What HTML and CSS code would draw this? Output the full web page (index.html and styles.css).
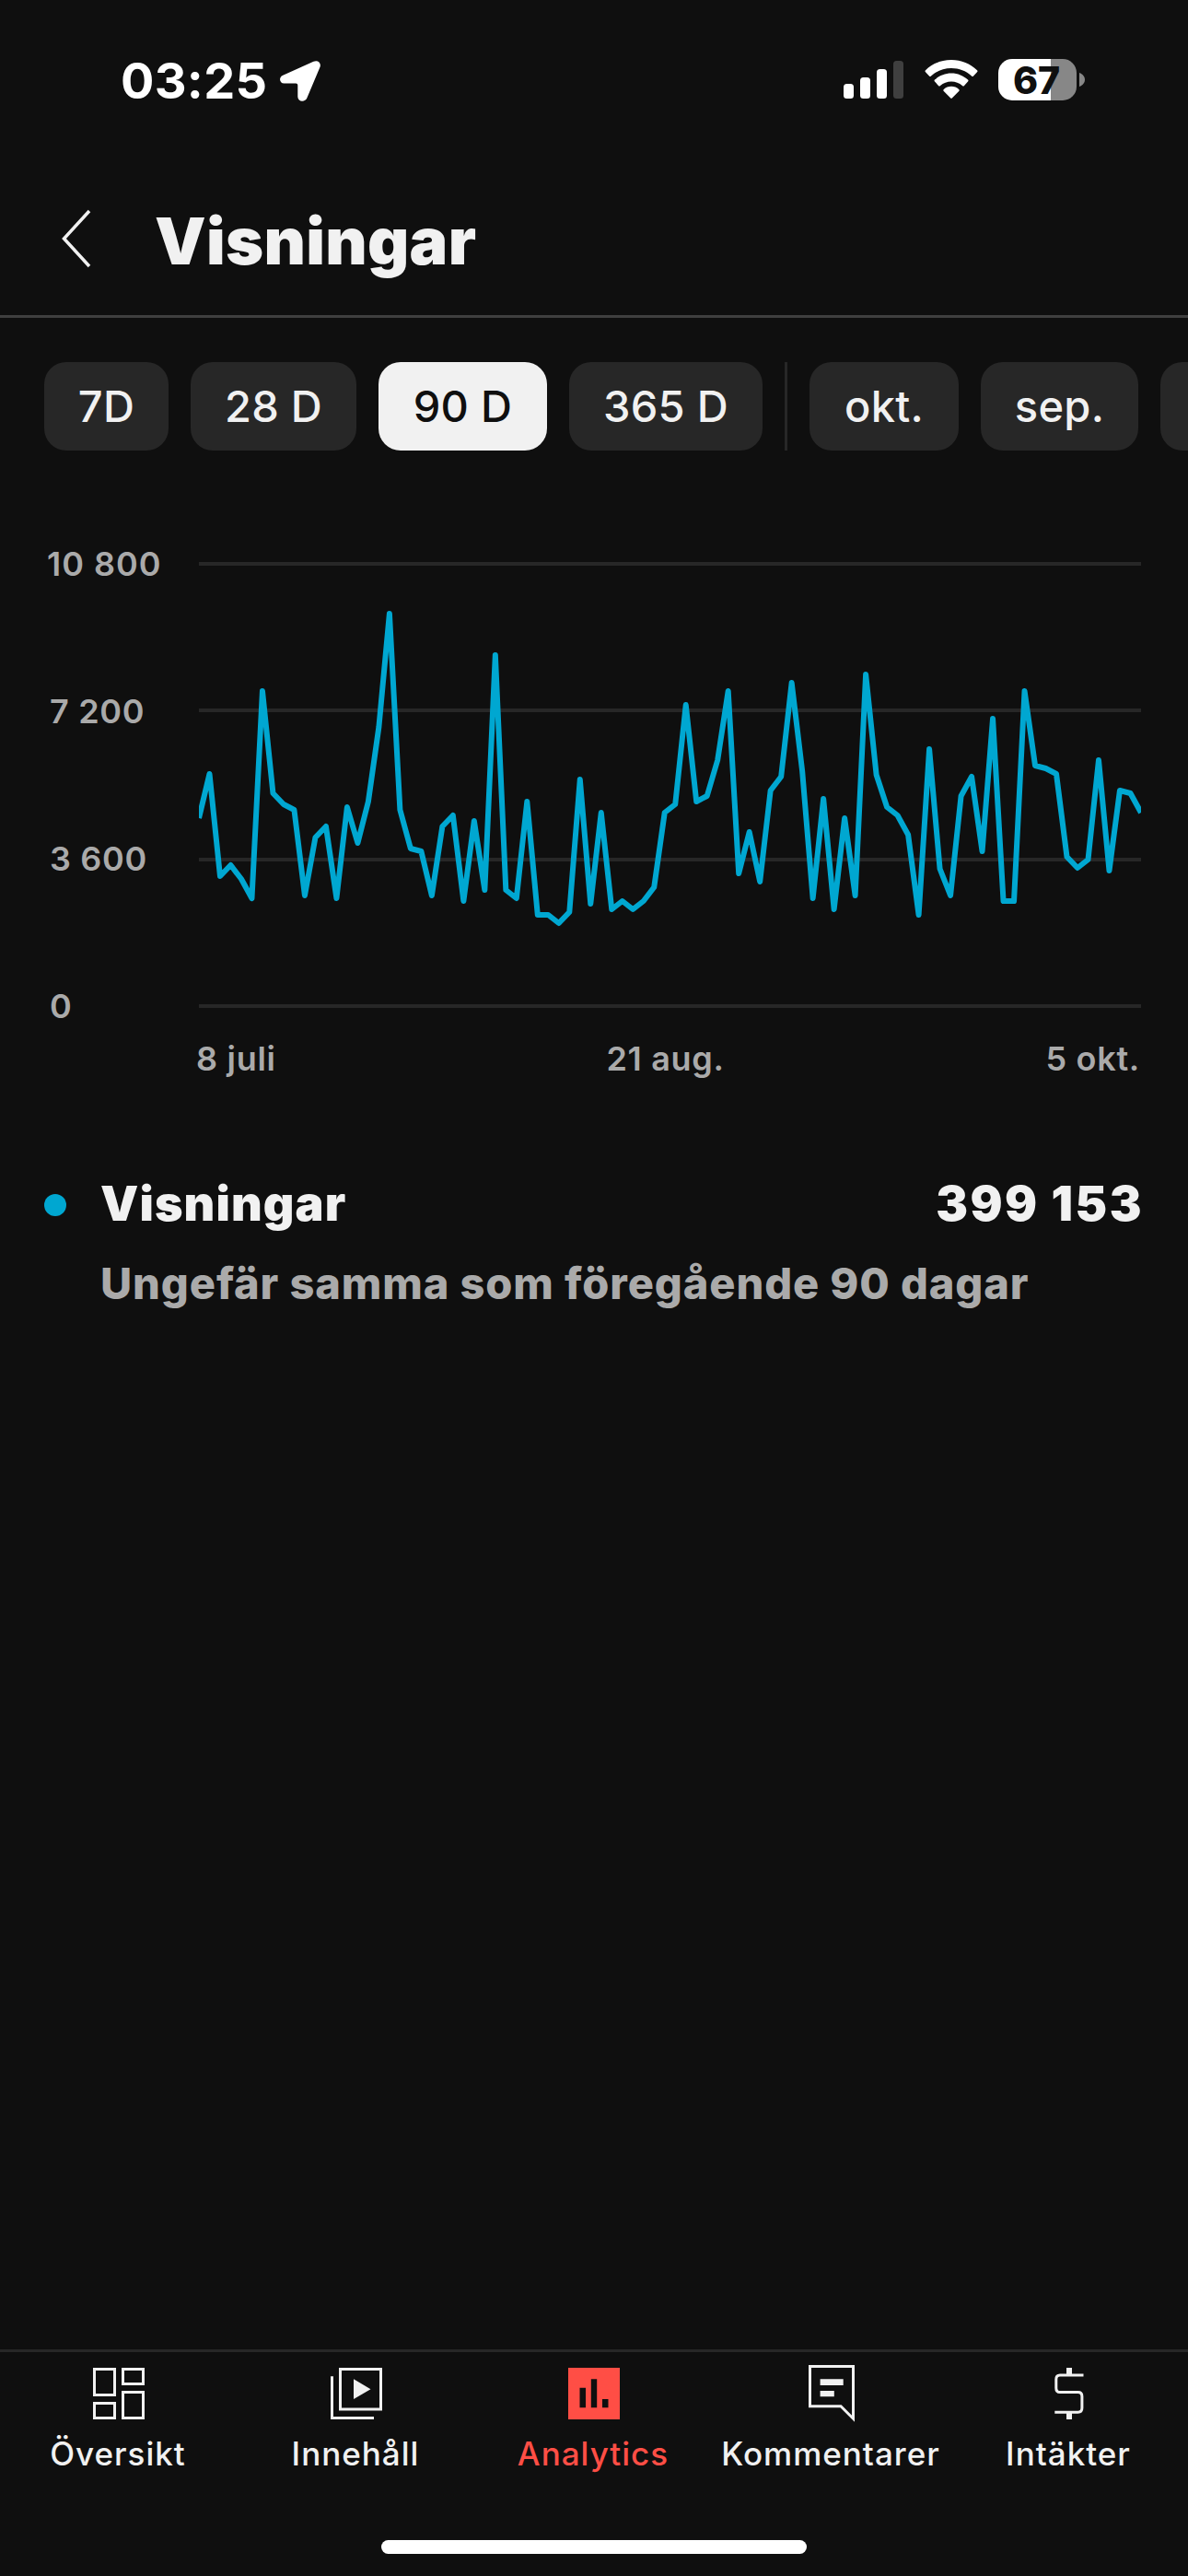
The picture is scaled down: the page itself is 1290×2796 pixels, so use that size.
FILE: index.html
```html
<!DOCTYPE html>
<html lang="sv">
<head>
<meta charset="UTF-8" />
<meta name="viewport" content="width=device-width, initial-scale=1.0"/>
<title>Visningar</title>
<link rel="stylesheet" href="styles.css">
</head>
<body>
  <div class="status-bar">
    <span class="time">03:25</span>
    <svg class="location" width="46" height="46" viewBox="0 0 46 46">
      <path d="M37.500 1.800 C41.500 -0.200 46 2.500 44.600 7.500 L30.500 41 C28.500 46.300 20.500 46 20.300 40 V27.500 Q20.300 25.500 18.300 25.500 H5.500 C0.500 25.500 -0.800 19 4.200 16.800Z"/>
    </svg>
    <svg class="signal" width="65" height="41" viewBox="0 0 65 41">
      <rect x="0" y="25" width="11" height="16" rx="3.500"/>
      <rect x="18" y="18" width="11" height="23" rx="3.500"/>
      <rect x="36" y="9" width="11" height="32" rx="3.500"/>
      <rect class="dim" x="54" y="0" width="11" height="41" rx="3.500"/>
    </svg>
    <svg class="wifi" width="58" height="42" viewBox="0 0 58 42">
      <path d="M29 0 C40 0 49.500 4.200 57 11.200 Q58 12.200 57 13.200 L53 17.400 Q52 18.400 51 17.400 C45 12 37.500 9 29 9 C20.500 9 13 12 7 17.400 Q6 18.400 5 17.400 L1 13.200 Q0 12.200 1 11.200 C8.500 4.200 18 0 29 0Z"/>
      <path d="M29 14.500 C36 14.500 42.200 17.200 47 21.600 Q48 22.600 47 23.600 L43 27.900 Q42 28.900 41 27.900 C37.600 25 33.500 23.400 29 23.400 C24.500 23.400 20.400 25 17 27.900 Q16 28.900 15 27.900 L11 23.600 Q10 22.600 11 21.600 C15.800 17.200 22 14.500 29 14.500Z"/>
      <path d="M29 28.800 C32.300 28.800 35 30 37.200 32 Q38.200 33 37.200 34 L30 41.300 Q29 42.300 28 41.300 L20.800 34 Q19.800 33 20.800 32 C23 30 25.700 28.800 29 28.800Z"/>
    </svg>
    <div class="battery"><span>67</span></div>
    <svg class="battery-cap" width="6" height="15" viewBox="0 0 6 15">
      <path d="M0 0 C3.500 1.300 6 4 6 7.500 C6 11 3.500 13.700 0 15Z"/>
    </svg>
  </div>

  <header class="header">
    <svg class="back" width="34" height="64" viewBox="0 0 34 64">
      <path d="M31 2 L3.500 32 L31 62"/>
    </svg>
    <h1>Visningar</h1>
  </header>

  <div class="chips">
    <div class="chip w135">7D</div>
    <div class="chip w180">28 D</div>
    <div class="chip w183 selected">90 D</div>
    <div class="chip w210">365 D</div>
    <div class="chip-divider"></div>
    <div class="chip w162">okt.</div>
    <div class="chip w171">sep.</div>
    <div class="chip cut"></div>
  </div>

  <section class="chart">
    <div class="y-axis">
      <span class="first">10 800</span>
      <span>7 200</span>
      <span>3 600</span>
      <span>0</span>
    </div>
    <div class="plot">
      <svg width="1023" height="484" viewBox="0 0 1023 484">
        <g class="grid">
          <rect y="0" width="1023" height="4"/>
          <rect y="159" width="1023" height="4"/>
          <rect y="321" width="1023" height="4"/>
          <rect y="480" width="1023" height="4"/>
        </g>
        <!-- x is the day number, 0 = 8 juli, 89 = 5 okt. -->
        <polyline class="line" transform="scale(11.494 1)" points="
          0,278 1,230 2,341 3,329 4,344 5,365 6,140 7,251 8,263 9,269
          10,362 11,299 12,287 13,365 14,266 15,305 16,260 17,179 18,56 19,269
          20,311 21,314 22,362 23,287 24,275 25,368 26,281 27,356 28,101 29,356
          30,365 31,260 32,383 33,383 34,392 35,380 36,236 37,371 38,272 39,377
          40,368 41,377 42,368 43,353 44,272 45,263 46,155 47,260 48,254 49,215
          50,140 51,338 52,293 53,347 54,248 55,233 56,131 57,227 58,365 59,257
          60,377 61,278 62,362 63,122 64,231 65,266 66,275 67,296 68,383 69,203
          70,333 71,362 72,254 73,233 74,314 75,170 76,368 77,368 78,140 79,221
          80,224 81,230 82,320 83,332 84,323 85,215 86,335 87,248 88,251 89,272"/>
      </svg>
      <div class="x-axis">
        <span>8 juli</span>
        <span class="middle">21 aug.</span>
        <span>5 okt.</span>
      </div>
    </div>
  </section>

  <section class="summary">
    <div class="dot"></div>
    <div class="summary-text">
      <div class="summary-row">
        <span>Visningar</span>
        <span class="total">399 153</span>
      </div>
      <p>Ungefär samma som föregående 90 dagar</p>
    </div>
  </section>

  <nav class="tabs">
    <div class="tab">
      <svg width="72" height="72" viewBox="0 0 72 72">
        <path d="M9.500 9.500H31.500V37.500H9.500ZM40.500 9.500H62.500V25.500H40.500ZM9.500 46.500H31.500V62.500H9.500ZM40.500 34.500H62.500V62.500H40.500Z"/>
      </svg>
      <span>Översikt</span>
    </div>
    <div class="tab">
      <svg width="72" height="72" viewBox="0 0 72 72">
        <path d="M18.500 9.500H62.500V53H18.500ZM9.500 17.300V62.500H55"/>
        <path class="solid" d="M33 20.300L51.500 31.200L33 42Z"/>
      </svg>
      <span>Innehåll</span>
    </div>
    <div class="tab active">
      <svg width="72" height="72" viewBox="0 0 72 72">
        <path class="solid" fill-rule="evenodd" d="M8 8H64V64H8ZM20.500 29.700V51.300H27V29.700ZM32.800 20.300V51.300H39.200V20.300ZM45 42V51.300H51.500V42Z"/>
      </svg>
      <span>Analytics</span>
    </div>
    <div class="tab">
      <svg width="72" height="72" viewBox="0 0 72 72">
        <path d="M12.500 6.500H59.500V63.200L46 49.800H12.500Z"/>
        <path class="solid" d="M23.600 20.300H48.700V27H23.600ZM23.600 33H38.800V39.300H23.600Z"/>
      </svg>
      <span>Kommentarer</span>
    </div>
    <div class="tab">
      <svg width="72" height="72" viewBox="0 0 72 72">
        <path d="M51.500 16H26Q21.800 16 21.800 20.500V30Q21.800 34.600 26 34.600H45.500Q49.900 34.600 49.900 39V51.500Q49.900 56.200 45.500 56.200H20.300"/>
        <path class="solid" d="M33 8H39V16H33ZM33 56H39V64H33Z"/>
      </svg>
      <span>Intäkter</span>
    </div>
  </nav>
  <div class="home-indicator"></div>
</body>
</html>
```

FILE: styles.css
```css
* {
  box-sizing: border-box;
}
body {
  margin: 0;
  width: 1290px;
  height: 2796px;
  overflow: hidden;
  display: flex;
  flex-direction: column;
  background: #0f0f0f;
  color: #f1f1f1;
  font-family: Inter, "Liberation Sans", sans-serif;
}
svg {
  display: block;
  flex: none;
}

/* status bar */
.status-bar {
  display: flex;
  align-items: flex-start;
  height: 178px;
  padding: 64px 112px 0 131px;
  color: #fff;
  fill: #fff;
}
.time {
  width: 172px;
  font-size: 54px;
  font-weight: 750;
  line-height: 48px;
  letter-spacing: 0.3px;
  white-space: nowrap;
}
.location {
  margin-top: 1px;
  margin-right: auto;
}
.signal {
  margin-top: 2px;
}
.signal .dim {
  fill: #3f3f3f;
}
.wifi {
  margin: 1px 22px 0 23px;
}
.battery {
  width: 85px;
  height: 45px;
  padding-right: 2px;
  border-radius: 15px;
  background: linear-gradient(to right, #fff 67.5%, #878787 67.5%);
  color: #0f0f0f;
  font-size: 41px;
  font-weight: 850;
  line-height: 46px;
  text-align: center;
}
.battery-cap {
  margin: 15px 0 0 3px;
  fill: #878787;
}

/* header */
.header {
  display: flex;
  align-items: center;
  height: 167px;
  padding: 0 0 3px 66px;
  border-bottom: 3px solid #3f3f3f;
}
.back {
  margin-top: 1px;
  fill: none;
  stroke: #f1f1f1;
  stroke-width: 3.5;
}
.header h1 {
  margin: 7px 0 0 68px;
  font-size: 70px;
  font-weight: 900;
  line-height: 84px;
  letter-spacing: 0.3px;
}

/* period chips */
.chips {
  display: flex;
  gap: 24px;
  padding: 48px 0 0 48px;
}
.chip {
  flex: none;
  height: 96px;
  border-radius: 24px;
  background: #272727;
  font-size: 47px;
  font-weight: 550;
  line-height: 96px;
  letter-spacing: 0.3px;
  text-align: center;
  white-space: nowrap;
}
.chip.selected {
  background: #f1f1f1;
  color: #0f0f0f;
}
.chip-divider {
  flex: none;
  width: 3px;
  background: #272727;
}
.w135 { width: 135px; }
.w162 { width: 162px; }
.w171 { width: 171px; }
.w180 { width: 180px; }
.w183 { width: 183px; }
.w210 { width: 210px; }
.chip.cut {
  width: 30px;
  border-radius: 24px 0 0 24px;
}

/* chart */
.chart {
  display: flex;
  margin-top: 121px;
  color: #aaa;
  font-size: 36px;
  font-weight: 570;
  letter-spacing: 0.7px;
}
.y-axis {
  display: flex;
  flex-direction: column;
  justify-content: space-between;
  width: 216px;
  height: 524px;
  margin-top: -20px;
  padding-left: 54px;
  line-height: 44px;
}
.y-axis .first {
  margin-left: -3px;
  letter-spacing: 1px;
}
.plot {
  width: 1023px;
}
.grid {
  fill: #272727;
}
.line {
  fill: none;
  stroke: #00a7d1;
  stroke-width: 6;
  stroke-linejoin: round;
  vector-effect: non-scaling-stroke;
}
.x-axis {
  display: flex;
  justify-content: space-between;
  margin: 33px 1px 0 -3px;
  line-height: 44px;
}
.x-axis .middle {
  margin-left: 10px;
}

/* summary */
.summary {
  display: flex;
  align-items: flex-start;
  padding: 102px 51px 0 48px;
}
.dot {
  width: 24px;
  height: 24px;
  margin-top: 23px;
  border-radius: 50%;
  background: #00a7d1;
}
.summary-text {
  flex: 1;
  margin-left: 37px;
}
.summary-row {
  display: flex;
  justify-content: space-between;
  font-size: 52px;
  font-weight: 900;
  line-height: 68px;
  letter-spacing: 1.1px;
}
.total {
  margin-right: -3px;
  letter-spacing: 2.5px;
}
.summary p {
  margin: 24px 0 0;
  color: #aaa;
  font-size: 47px;
  font-weight: 800;
  line-height: 56px;
  letter-spacing: 0.9px;
  white-space: nowrap;
}

/* bottom navigation */
.tabs {
  display: flex;
  height: 207px;
  margin-top: auto;
  border-top: 3px solid #272727;
}
.tab {
  display: flex;
  flex-direction: column;
  align-items: center;
  width: 258px;
  padding-top: 9px;
  font-size: 35px;
  font-weight: 550;
  line-height: 42px;
  letter-spacing: 1px;
}
.tab span {
  margin-left: -2px;
}
.tab svg {
  margin-bottom: 8px;
  fill: none;
  stroke: #f1f1f1;
  stroke-width: 3;
}
.tab .solid {
  fill: #f1f1f1;
  stroke: none;
}
.tab.active {
  color: #ff4e45;
}
.tab.active .solid {
  fill: #ff4e45;
}
.home-indicator {
  width: 462px;
  height: 15px;
  margin: 0 auto 24px;
  border-radius: 8px;
  background: #fff;
}
```
